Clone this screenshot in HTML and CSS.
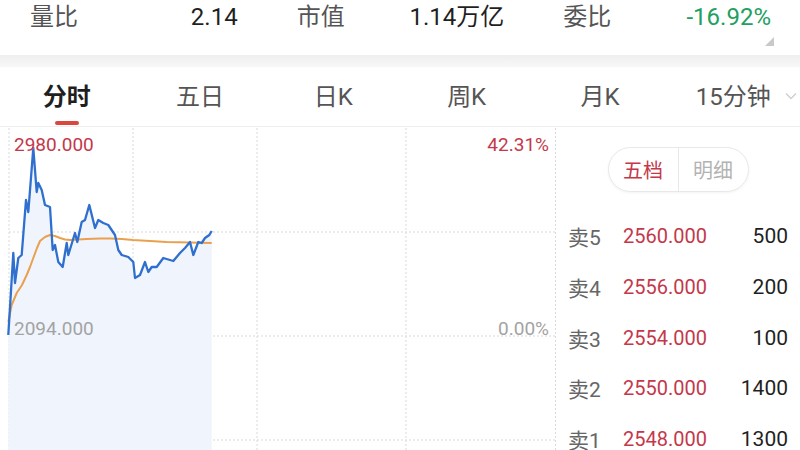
FILE: index.html
```html
<!DOCTYPE html>
<html lang="zh-CN">
<head>
    <meta charset="UTF-8">
    <meta name="viewport" content="width=device-width, initial-scale=1.0">
    <title>分时行情</title>
    <link rel="stylesheet" href="styles.css">
</head>
<body>

<!-- Indicateurs du titre -->
<div class="quote-bar">
    <div class="quote-item">
        <span class="quote-label">量比</span>
        <span class="quote-value">2.14</span>
    </div>
    <div class="quote-item">
        <span class="quote-label">市值</span>
        <span class="quote-value">1.14万亿</span>
    </div>
    <div class="quote-item">
        <span class="quote-label">委比</span>
        <span class="quote-value down">-16.92%</span>
        <i class="corner-mark"></i>
    </div>
</div>

<div class="band"></div>

<!-- Périodes -->
<nav class="period-tabs">
    <span class="tab active">分时</span>
    <span class="tab">五日</span>
    <span class="tab">日K</span>
    <span class="tab">周K</span>
    <span class="tab">月K</span>
    <span class="tab more">15分钟
        <svg class="chevron" width="12" height="8" viewBox="0 0 12 8"><path d="M1 1.5 L6 6.5 L11 1.5" fill="none" stroke="#cfcfcf" stroke-width="1.4"/></svg>
    </span>
</nav>

<div class="market">
    <!-- Courbe intraday -->
    <div class="chart">
        <svg width="556" height="323" viewBox="0 127 556 323">
            <g class="grid">
                <line x1="9" y1="128" x2="9" y2="450"/>
                <line x1="133" y1="128" x2="133" y2="450"/>
                <line x1="257" y1="128" x2="257" y2="450"/>
                <line x1="406" y1="128" x2="406" y2="450"/>
                <line x1="555.5" y1="128" x2="555.5" y2="450"/>
                <line x1="9" y1="232" x2="555" y2="232"/>
                <line x1="9" y1="336" x2="555" y2="336"/>
                <line x1="9" y1="440" x2="555" y2="440"/>
            </g>
            <polygon class="price-area" points="8.3,335 13.3,253 15,283 18.3,258 21.7,255 26,200 28.3,212 33.3,148 36.7,192 38.3,183 41.7,190 45,205 50,207 52.7,250 55,245 58.3,262 62.7,267 66.7,243 68.3,255 75,233 77.3,242 81.7,222 85,220 89.3,205 95,228 98.3,220 103.3,223 108.3,225 115,235 118.3,250 121.7,255 128.3,257 133.3,262 135,278 140,275 145,262 148.3,272 151.7,267 156.7,267 163.3,258 173.3,261 180,253 185,248 190,242 193.3,255 198.3,242 201.7,243 205,238 209.3,235 211.7,231 211.7,450 8.3,450"/>
            <polyline class="avg-line" points="8.3,322 11.7,305 16.7,293 22,285 26.7,275 30,267 33.3,258 37,248 40,241 45,237 50,235 55,236 60,238 65,239.5 70,240 78,239.5 86.7,239 100,238.5 110,238.5 122,239 133,240 150,241 166.7,242 190,242.5 211.7,243"/>
            <polyline class="price-line" points="8.3,335 13.3,253 15,283 18.3,258 21.7,255 26,200 28.3,212 33.3,148 36.7,192 38.3,183 41.7,190 45,205 50,207 52.7,250 55,245 58.3,262 62.7,267 66.7,243 68.3,255 75,233 77.3,242 81.7,222 85,220 89.3,205 95,228 98.3,220 103.3,223 108.3,225 115,235 118.3,250 121.7,255 128.3,257 133.3,262 135,278 140,275 145,262 148.3,272 151.7,267 156.7,267 163.3,258 173.3,261 180,253 185,248 190,242 193.3,255 198.3,242 201.7,243 205,238 209.3,235 211.7,231"/>
        </svg>
        <span class="axis-label high left">2980.000</span>
        <span class="axis-label high right">42.31%</span>
        <span class="axis-label low left">2094.000</span>
        <span class="axis-label low right">0.00%</span>
    </div>

    <!-- Carnet d'ordres -->
    <div class="book">
        <div class="switch">
            <span class="switch-item on">五档</span>
            <span class="switch-item">明细</span>
        </div>
        <div class="book-row"><span class="side">卖5</span><span class="price">2560.000</span><span class="vol">500</span></div>
        <div class="book-row"><span class="side">卖4</span><span class="price">2556.000</span><span class="vol">200</span></div>
        <div class="book-row"><span class="side">卖3</span><span class="price">2554.000</span><span class="vol">100</span></div>
        <div class="book-row"><span class="side">卖2</span><span class="price">2550.000</span><span class="vol">1400</span></div>
        <div class="book-row"><span class="side">卖1</span><span class="price">2548.000</span><span class="vol">1300</span></div>
    </div>
</div>

</body>
</html>
```

FILE: styles.css
```css
:root {
    --up-color: #c4384a;
    --down-color: #22a05e;
    --text-dark: #1f1f1f;
    --text-mid: #555;
    --text-light: #a3a3a3;
    --grid-color: #d9d9d9;
}

body {
    margin: 0;
    width: 800px;
    height: 450px;
    overflow: hidden;
    background: #fff;
    font-family: Roboto, "Noto Sans CJK SC", sans-serif;
    color: var(--text-dark);
}

/* Bandeau des indicateurs */
.quote-bar {
    position: relative;
    display: grid;
    grid-template-columns: repeat(3, 1fr);
    height: 55px;
    box-sizing: border-box;
    padding-top: 3px;
    font-size: 24px;
    line-height: 28px;
}

.quote-item {
    display: flex;
    justify-content: space-between;
    padding: 0 29px 0 30px;
}

.quote-label {
    color: var(--text-mid);
}

.quote-value.down {
    color: var(--down-color);
}

.corner-mark {
    position: absolute;
    left: 765px;
    top: 37px;
    width: 0;
    height: 0;
    border-left: 9px solid transparent;
    border-bottom: 9px solid #c9c9c9;
}

.band {
    height: 12px;
    background: linear-gradient(#eeeeee, #f8f8f8);
}

/* Onglets de période */
.period-tabs {
    display: grid;
    grid-template-columns: repeat(6, 1fr);
    height: 60px;
    box-sizing: border-box;
    padding-bottom: 5px;
    border-bottom: 1px solid #eeeeee;
    font-size: 24px;
}

.tab {
    position: relative;
    display: flex;
    align-items: center;
    justify-content: center;
    color: var(--text-mid);
}

.tab.active {
    color: var(--text-dark);
    font-weight: bold;
}

.tab.active::after {
    content: "";
    position: absolute;
    bottom: -4px;
    left: 50%;
    width: 24px;
    height: 4px;
    margin-left: -12px;
    border-radius: 2px;
    background: #d9473e;
}

.chevron {
    position: absolute;
    left: 118px;
    top: 25px;
}

/* Zone graphique + carnet */
.market {
    display: flex;
    height: 323px;
}

.chart {
    position: relative;
    width: 556px;
    flex: none;
}

.chart svg {
    display: block;
}

.grid line {
    stroke: var(--grid-color);
    stroke-width: 1;
    stroke-dasharray: 2 2;
}

.price-area {
    fill: #f0f5fd;
}

.price-line {
    fill: none;
    stroke: #2f70cf;
    stroke-width: 2.3;
    stroke-linejoin: round;
}

.avg-line {
    fill: none;
    stroke: #e9a04f;
    stroke-width: 2;
    stroke-linejoin: round;
}

.axis-label {
    position: absolute;
    font-size: 19px;
    line-height: 22px;
}

.axis-label.high {
    top: 7px;
    color: var(--up-color);
}

.axis-label.low {
    top: 191px;
    color: var(--text-light);
}

.axis-label.left {
    left: 14px;
}

.axis-label.right {
    right: 7px;
}

.book {
    flex: 1;
    padding: 20px 12px 0 12px;
}

.switch {
    display: flex;
    width: 141px;
    height: 45px;
    margin: 0 auto 19px;
    box-sizing: border-box;
    border: 1px solid #e8e8e8;
    border-radius: 23px;
    box-shadow: 0 1px 3px rgba(0, 0, 0, 0.05);
    font-size: 20px;
}

.switch-item {
    flex: 1;
    display: flex;
    align-items: center;
    justify-content: center;
    color: #b3b3b3;
}

.switch-item.on {
    color: var(--up-color);
    border-right: 1px solid #e8e8e8;
}

.book-row {
    display: grid;
    grid-template-columns: 55px 1fr auto;
    align-items: center;
    height: 50.7px;
    font-size: 20px;
}

.side {
    color: #666;
    font-size: 21px;
}

.price {
    color: var(--up-color);
}

.vol {
    color: var(--text-dark);
    font-size: 21px;
}
```
